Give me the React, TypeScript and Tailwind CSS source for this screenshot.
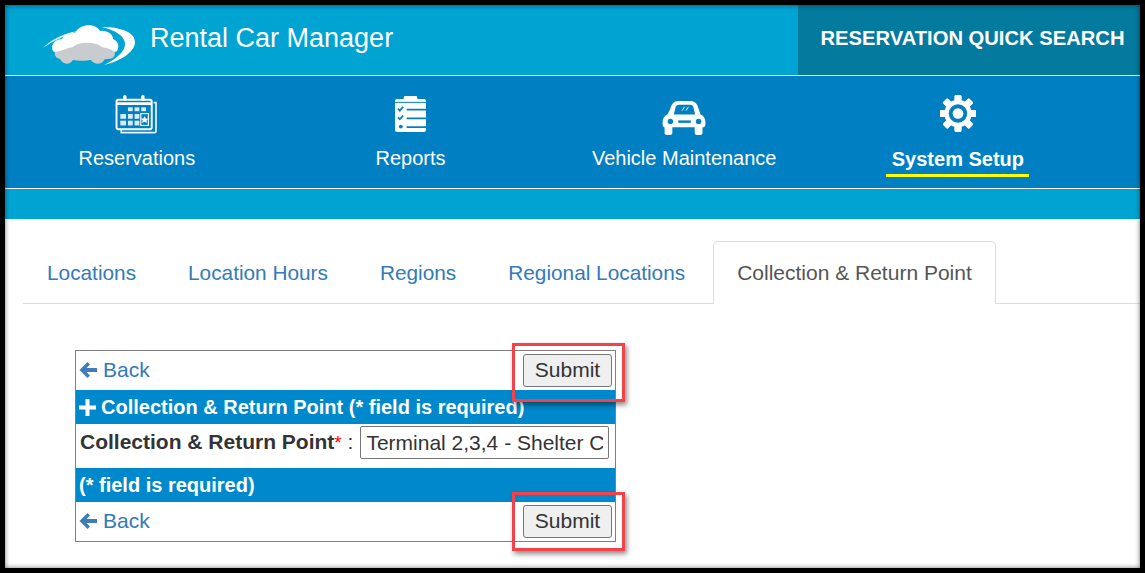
import React from "react";

const Logo = () => (
  <svg width="96" height="44" viewBox="0 0 96 44" className="block">
    <path d="M1 24 C10 15 22 9 36 7 C22 12 11 17 1 24Z" fill="#dff3fa" />
    <path d="M60 3 C80 3 94 9 93 19 C92 29 76 38 62 41 C74 35 84 27 83 19 C82 11 72 6 60 3Z" fill="#ffffff" />
    <path d="M11 27 C8 21 13 15 20 15 C23 9 29 8 33 9 C38 -1 54 -1 58 7 C65 6 71 10 71 15 C76 17 78 22 75 27 C74 30 13 31 11 27Z" fill="#ffffff" />
    <path d="M13 28 C20 27 25 24 31 23 C36 18 52 17 60 23 C64 24 71 25 73 29 C73 32 71 35 66 35 C63 35 63 35 62 36 C60 41 52 41 49 36 C44 37 36 37 31 36 C28 41 21 41 18 35 C14 34 12 31 13 28Z" fill="#c9ccce" />
  </svg>
);

const CalendarIcon = () => (
  <svg width="43" height="39" viewBox="0 0 44 41" fill="none" className="block">
    <path d="M40 8 h2.500 v30 a1.500 1.500 0 0 1 -1.500 1.500 H6 v-3" stroke="#fff" strokeWidth="1.800" opacity="0.9" />
    <rect x="1" y="5" width="37" height="31" rx="2" stroke="#fff" strokeWidth="2" />
    <path d="M1 9h37" stroke="#fff" strokeWidth="3" />
    <rect x="8" y="0" width="3.500" height="6" rx="1.700" fill="#fff" />
    <rect x="27" y="0" width="3.500" height="6" rx="1.700" fill="#fff" />
    <g fill="#fff" opacity="0.85">
      <rect x="13" y="13" width="5" height="4" /><rect x="20" y="13" width="5" height="4" /><rect x="27" y="13" width="5" height="4" />
      <rect x="5" y="20" width="6" height="5" /><rect x="13" y="20" width="5" height="5" /><rect x="20" y="20" width="5" height="5" />
      <rect x="5" y="27" width="6" height="5" /><rect x="13" y="27" width="5" height="5" /><rect x="20" y="27" width="5" height="5" />
    </g>
    <rect x="26.500" y="19.500" width="8" height="12.500" stroke="#fff" strokeWidth="1.200" />
    <path d="M30.500 22l1.300 2.600 2.700.3-2 1.900.6 2.700-2.600-1.400-2.600 1.400.6-2.700-2-1.900 2.700-.3z" fill="#fff" />
  </svg>
);

const ClipboardIcon = () => (
  <svg width="31" height="36" viewBox="0 0 32 37" className="mb-[2px] block">
    <path d="M2 3h7V1.500A1.500 1.500 0 0 1 10.500 0h11A1.500 1.500 0 0 1 23 1.500V3h7a2 2 0 0 1 2 2v30a2 2 0 0 1-2 2H2a2 2 0 0 1-2-2V5a2 2 0 0 1 2-2z" fill="#fff" />
    <path d="M0 6.500h32" stroke="#0080c2" strokeWidth="1" />
    <g stroke="#0080c2" strokeWidth="1.800" fill="none">
      <path d="M3 13l2 2 3.500-4M3 22l2 2 3.500-4" />
      <path d="M12 14h20M12 23h20M12 32h20" />
    </g>
    <circle cx="6" cy="31.500" r="2" fill="#0080c2" />
  </svg>
);

const CarIcon = () => (
  <svg width="45" height="35" viewBox="0 0 45 36" className="-mb-[1px] block">
    <path d="M8 9C9 4 12 1 16 1h13c4 0 7 3 8 8l2 6c3 1 5 4 5 8v3c0 1-1 2-2 2h-1v6c0 1-1 2-2 2h-4c-1 0-2-1-2-2v-6H10v6c0 1-1 2-2 2H4c-1 0-2-1-2-2v-6H2c-1 0-2-1-2-2v-3c0-4 2-7 5-8z" fill="#fff" />
    <path d="M11.500 15l2-8c.300-1 2-2 3-2h12c1 0 2.700 1 3 2l2 8z" fill="#0080c2" />
    <path d="M20 11l2.500-4M24 11l2.500-4" stroke="#fff" strokeWidth="1" />
    <circle cx="8" cy="22" r="2.800" fill="#0080c2" />
    <circle cx="37" cy="22" r="2.800" fill="#0080c2" />
    <rect x="16" y="21" width="13" height="2.500" fill="#0080c2" />
  </svg>
);

const GearIcon = () => (
  <svg width="36" height="39" viewBox="0 0 36 40" className="mb-[1px] block">
    <g fill="#fff">
      {[0, 45, 90, 135, 180, 225, 270, 315].map((a) => (
        <rect key={a} x="14.500" y="1" width="7" height="38" rx="1.500" transform={`rotate(${a} 18 20)`} />
      ))}
    </g>
    <circle cx="18" cy="20" r="14" fill="#fff" />
    <circle cx="18" cy="20" r="9.500" fill="#0080c2" />
    <circle cx="18" cy="20" r="5.500" fill="#fff" />
  </svg>
);

const BackRow = ({ last }: { last?: boolean }) => (
  <div className="relative flex h-[39px] items-center justify-between pl-[3px] pr-[3px]">
    <a className="flex items-center pb-[2px] text-[21px] text-[#337ab7]">
      <svg width="18" height="18" viewBox="0 0 18 18" className="mr-[6px] mt-[1px] block">
        <path d="M8.500 1 .5 9l8 8 2.500-2.500L7.500 11H18V7H7.500L11 3.500z" fill="#3f7db8" />
      </svg>
      Back
    </a>
    <button className="h-[33px] w-[89px] rounded-[3px] border border-[#767676] bg-[#efefef] pb-[2px] text-[21px] leading-none text-[#333]">
      Submit
    </button>
    <div className={`pointer-events-none absolute left-[436px] h-[59px] w-[113px] border-[3px] border-[#f2424a] shadow-[2px_3px_5px_rgba(0,0,0,0.45)] ${last ? "top-[-10px]" : "top-[-8px]"}`} />
  </div>
);

const NavItem = ({ icon, label, active }: { icon: React.ReactNode; label: string; active?: boolean }) => (
  <div className="flex flex-col items-center">
    <div className="flex h-[61px] items-end justify-center pb-[3px]">{icon}</div>
    {active ? (
      <span className="mt-[9px] w-[143px] border-b-[3px] border-[#ffff00] pb-[2px] text-center text-[20px] font-bold leading-[26px] text-white">
        {label}
      </span>
    ) : (
      <span className="mt-[8px] text-[20px] leading-[26px] text-white">{label}</span>
    )}
  </div>
);

const tabs = ["Locations", "Location Hours", "Regions", "Regional Locations"];

export default function App() {
  return (
    <div className="relative h-[573px] w-[1145px] overflow-hidden bg-black p-[5px] font-['Liberation_Sans',Arial,sans-serif]">
      <div className="h-[563px] w-[1135px] overflow-hidden bg-white">
        <header className="flex h-[71px] border-b border-white bg-[#00a4d3]">
          <div className="flex flex-1 items-start pl-[37px] pt-[19px]">
            <Logo />
            <span className="-mt-[2px] ml-[12px] text-[27px] leading-[32px] text-white">Rental Car Manager</span>
          </div>
          <div className="flex h-full w-[342px] items-start justify-center bg-[#047a9e] pl-[7px] pt-[21px] text-[20.200px] font-bold leading-[25px] text-white">
            RESERVATION QUICK SEARCH
          </div>
        </header>
        <nav className="-ml-[5px] grid h-[113px] w-[1140px] grid-cols-[273.700px_273.700px_273.700px_273.700px_1fr] border-b border-white bg-[#0080c2]">
          <NavItem icon={<CalendarIcon />} label="Reservations" />
          <NavItem icon={<ClipboardIcon />} label="Reports" />
          <NavItem icon={<CarIcon />} label="Vehicle Maintenance" />
          <NavItem icon={<GearIcon />} label="System Setup" active />
        </nav>
        <div className="h-[30px] bg-[#00a4d3]" />
        <div className="ml-[18px] mt-[22px] flex h-[63px] items-stretch border-b border-[#dddddd]">
          {tabs.map((t) => (
            <a key={t} className="mr-[4px] flex items-center px-[24px] pt-[2px] text-[20.800px] text-[#337ab7]">
              {t}
            </a>
          ))}
          <a className="-mb-[1px] flex items-center rounded-t-[5px] border border-b-0 border-[#dddddd] bg-white px-[23px] text-[21px] text-[#555555]">
            Collection &amp; Return Point
          </a>
        </div>
        <div className="ml-[70px] mt-[46px] w-[541px] border border-[#808080] bg-white">
          <BackRow />
          <div className="flex h-[34px] items-center bg-[#0088cc] pl-[3px] text-[20px] font-bold text-white">
            <svg width="17" height="17" viewBox="0 0 17 17" className="mr-[5px] block">
              <path d="M6.500 0h4v6.500H17v4h-6.500V17h-4v-6.500H0v-4h6.500z" fill="#fff" />
            </svg>
            Collection &amp; Return Point (* field is required)
          </div>
          <div className="flex h-[44px] items-start pl-[4px] pt-[2px]">
            <label className="pt-[3px] text-[21px] font-bold leading-[26px] text-[#333]">
              Collection &amp; Return Point<span className="text-[19px] font-normal leading-none text-[#ff0000]">*</span>
              <span className="font-normal"> : </span>
            </label>
            <input
              readOnly
              value="Terminal 2,3,4 - Shelter C"
              className="ml-[7px] h-[33px] w-[249px] rounded-[2px] border border-[#767676] bg-white px-[5px] text-[21px] text-[#333] outline-none"
            />
          </div>
          <div className="flex h-[34px] items-center bg-[#0088cc] pl-[3px] text-[20px] font-bold text-white">
            (* field is required)
          </div>
          <BackRow last />
        </div>
      </div>
      <div className="pointer-events-none absolute inset-[5px] shadow-[inset_0_0_5px_rgba(0,0,0,0.55)]" />
    </div>
  );
}
